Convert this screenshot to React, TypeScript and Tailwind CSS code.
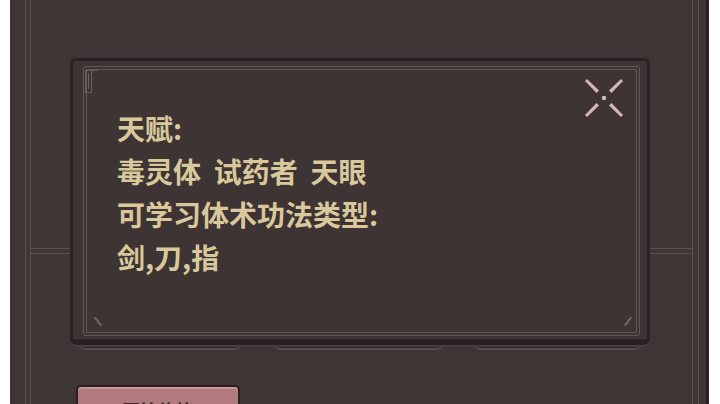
import React from 'react';

const cjk = { fontFamily: '"Noto Sans CJK SC", "Noto Sans", sans-serif' };

function CloseMark() {
  return (
    <svg width="44" height="44" viewBox="0 0 44 44" className="block">
      <g fill="#d6b7b6">
        <path d="M3 5 L5 3 L17 14.5 L14.5 17 Z" />
        <path d="M41 5 L39 3 L27 14.5 L29.5 17 Z" />
        <path d="M3 39 L5 41 L17 29.5 L14.5 27 Z" />
        <path d="M41 39 L39 41 L27 29.5 L29.5 27 Z" />
      </g>
      <rect x="20" y="20" width="4" height="4" rx="1" fill="#d6b7b6" />
    </svg>
  );
}

function CornerTick({ flip }: { flip?: boolean }) {
  return (
    <svg width="12" height="12" viewBox="0 0 12 12" className={flip ? 'block -scale-x-100' : 'block'}>
      <g stroke="#75625f" strokeWidth="2" strokeLinecap="round">
        <line x1="2" y1="3" x2="5" y2="6" />
        <line x1="5" y1="7" x2="8" y2="10" />
      </g>
    </svg>
  );
}

function Dialog() {
  return (
    <div className="absolute left-[70px] top-[58px] w-[580px] h-[287px] rounded-[6px] border-[3px] border-b-[6px] border-[#2a2222] bg-[#3d3433] shadow-[0_2px_0_#4a3d3d]">
      <div className="absolute left-[10px] top-[5px] right-[7px] bottom-[3px] rounded-[3px] border-4 border-double border-[#665756]" />
      {/* top-left bracket ornament */}
      <svg width="16" height="28" viewBox="0 0 16 28" className="absolute left-[10px] top-[6px]">
        <g fill="none" stroke="#6e5e5c" strokeWidth="1">
          <path d="M2.5 3.5 H14.5" />
          <path d="M2.5 3.5 V25.5 H8.5 V3.5" />
          <path d="M5.5 6 V22" />
        </g>
      </svg>
      <div className="absolute left-[20px] bottom-[12px]">
        <CornerTick />
      </div>
      <div className="absolute right-[14px] bottom-[12px]">
        <CornerTick flip />
      </div>
      <button className="absolute right-[21px] top-[15px]">
        <CloseMark />
      </button>
      <div
        className="absolute left-[44px] top-[46px] text-[28px] leading-[43px] font-bold text-[#d9c89c] whitespace-pre"
        style={cjk}
      >
        <p>天赋:</p>
        <p>毒灵体  试药者  天眼</p>
        <p>可学习体术功法类型:</p>
        <p>剑,刀,指</p>
      </div>
    </div>
  );
}

export default function App() {
  const tabs = [
    { ml: 'ml-[49px]', w: 'w-[160px]' },
    { ml: 'ml-[35px]', w: 'w-[167px]' },
    { ml: 'ml-[33px]', w: 'w-[165px]' },
  ];
  return (
    <div className="relative w-[720px] h-[404px] overflow-hidden bg-white" style={cjk}>
      <div className="ml-[10px] w-[699px] h-full flex bg-[#3e3534]">
        <div className="ml-[15px] w-[6px] h-full border-x border-[#5d4f4e]" />
        <div className="flex-1 flex flex-col">
          <div className="h-[248px] shrink-0" />
          <div className="h-[6px] shrink-0 border-y border-[#5d4f4e]" />
          <div className="mt-[46px] shrink-0 flex">
            {tabs.map((t, i) => (
              <div
                key={i}
                className={`${t.ml} ${t.w} h-[50px] rounded-[5px] border border-[#5b4b4b] border-b-2 bg-[#302727]`}
              />
            ))}
          </div>
          <div className="mt-[35px] shrink-0 ml-[45px] w-[164px] h-[44px] rounded-[5px] border-2 border-[#2a2222] bg-[#b27a7c] shadow-[inset_0_2px_0_#c9979a] flex justify-center pt-[14px]">
            <span className="text-[18px] leading-none font-bold text-[#3a2a2a]">开始修炼</span>
          </div>
        </div>
        <div className="w-[7px] h-full border-x border-[#5d4f4e]" />
        <div className="w-[7px]" />
        <div className="w-[3px] h-full bg-[#2a2222]" />
      </div>
      <Dialog />
    </div>
  );
}
